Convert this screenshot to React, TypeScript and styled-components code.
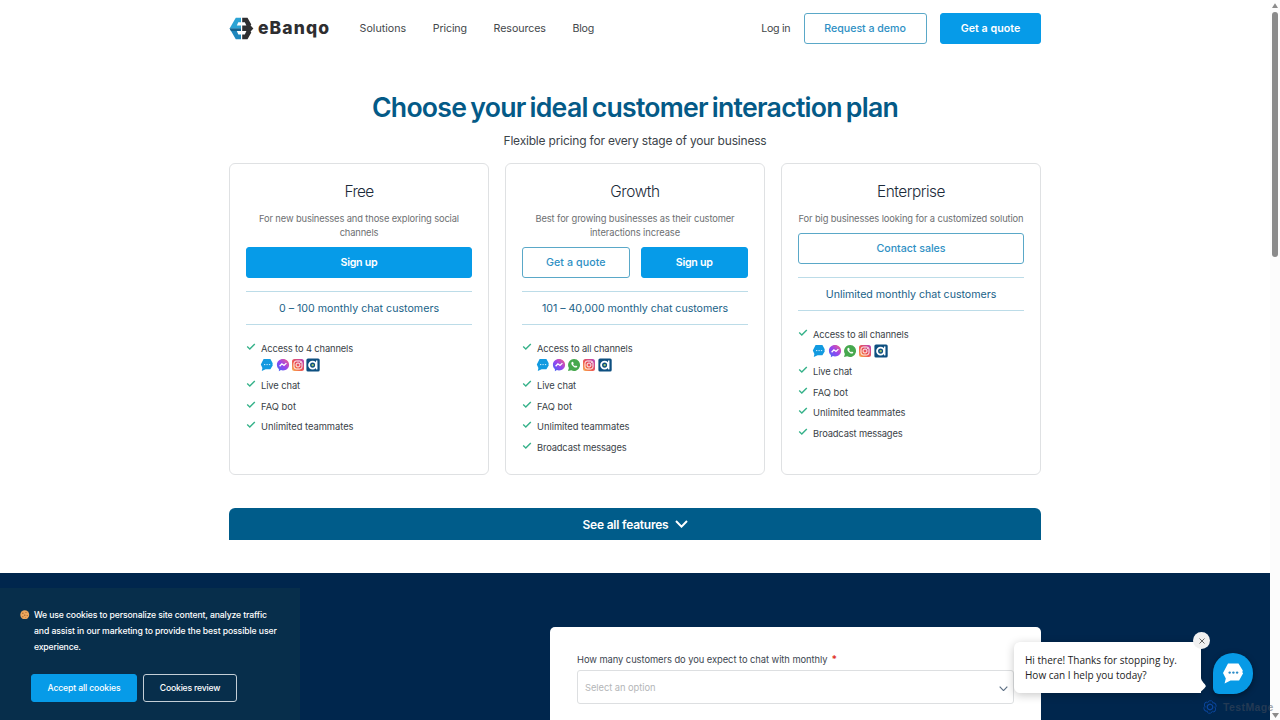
import React from "react";
import styled, { createGlobalStyle, css } from "styled-components";

const GlobalStyle = createGlobalStyle`
  *, *::before, *::after { box-sizing: border-box; }
  body { margin: 0; background: #fff; font-family: Inter, "Open Sans", sans-serif; color: #3a3f44; }
  h1, h2, p, ul { margin: 0; padding: 0; font-weight: 400; }
  button { font-family: inherit; }
`;

const Viewport = styled.div`
  display: grid;
  grid-template-columns: 1270px 10px;
  width: 1280px;
  height: 720px;
  overflow: hidden;
  position: relative;
`;

const Page = styled.div`
  display: flex;
  flex-direction: column;
  align-items: center;
  height: 720px;
  overflow: hidden;
`;

const Container = styled.div`
  width: 812px;
  flex: none;
  display: flex;
  flex-direction: column;
`;

const Label = styled.span<{ $ls?: number }>`
  letter-spacing: ${(p) => p.$ls ?? 0}px;
  white-space: nowrap;
`;

/* Header */
const Header = styled.header`
  display: flex;
  align-items: center;
  height: 57px;
  font-size: 10.67px;
  color: #43474b;
`;

const Logo = styled.div`
  display: flex;
  align-items: center;
  gap: 4px;
  width: 130.6px;
`;

const LogoText = styled.span`
  font-size: 17.5px;
  font-weight: 800;
  letter-spacing: 1.1px;
  line-height: 22px;
  color: #2e2e30;
  margin-top: -2px;
`;

const Nav = styled.nav`
  display: flex;
  gap: 26.6px;
  flex: 1;
`;

const HeaderActions = styled.div`
  display: flex;
  align-items: center;
  gap: 13.4px;
`;

const Button = styled.button<{ $outline?: boolean; $width?: number }>`
  height: 31px;
  flex: ${(p) => (p.$width ? "none" : "1")};
  ${(p) => p.$width && css`width: ${p.$width}px;`}
  padding: 0;
  border-radius: 3px;
  font-size: 10.67px;
  font-weight: ${(p) => (p.$outline ? 500 : 600)};
  line-height: 14px;
  border: 1px solid ${(p) => (p.$outline ? "#5aa8c8" : "#069be8")};
  background: ${(p) => (p.$outline ? "#fff" : "#069be8")};
  color: ${(p) => (p.$outline ? "#2e90c4" : "#fff")};
`;

/* Hero */
const Title = styled.h1`
  margin-top: 32px;
  height: 36px;
  line-height: 36px;
  font-size: 26.67px;
  font-weight: 600;
  letter-spacing: -0.75px;
  word-spacing: -2px;
  text-align: center;
  color: #045a87;
`;

const Subtitle = styled.p`
  margin-top: 7px;
  height: 16px;
  font-size: 12px;
  line-height: 17px;
  letter-spacing: -0.195px;
  text-align: center;
  color: #3c444a;
`;

/* Plans */
const Plans = styled.section`
  display: grid;
  grid-template-columns: repeat(3, 260px);
  gap: 16px;
  margin-top: 15px;
`;

const Card = styled.article`
  height: 312px;
  padding: 17px 16px 0;
  border: 1px solid #dfe1e3;
  border-radius: 6px;
  background: #fff;
  display: flex;
  flex-direction: column;
`;

const PlanName = styled.h2`
  font-size: 15.4px;
  font-weight: 300;
  line-height: 22px;
  text-align: center;
  color: #1c2b3a;
`;

const PlanText = styled.p`
  margin: 9px -4px 0;
  font-size: 9.33px;
  line-height: 14px;
  text-align: center;
  color: #6d6f72;
  display: flex;
  flex-direction: column;
`;

const PlanButtons = styled.div`
  display: flex;
  gap: 11px;
  margin-top: 7px;
`;

const PlanRange = styled.div`
  margin-top: 13px;
  height: 34px;
  line-height: 33px;
  border-top: 1px solid #bcdce8;
  border-bottom: 1px solid #bcdce8;
  font-size: 10.67px;
  text-align: center;
  color: #1a6288;
`;

const FeatureList = styled.ul`
  list-style: none;
  margin-top: 17px;
  display: flex;
  flex-direction: column;
  gap: 6.7px;
`;

const Feature = styled.li`
  display: grid;
  grid-template-columns: 10px 1fr;
  column-gap: 5px;
  font-size: 9.33px;
  line-height: 14px;
  color: #3a4247;
`;

const Channels = styled.div`
  grid-column: 2;
  display: flex;
  align-items: center;
  gap: 1.4px;
  height: 14px;
  margin: 2px 0 0.3px -0.7px;
`;

const SeeAll = styled.button`
  margin-top: 33px;
  height: 32px;
  border: 0;
  padding: 0;
  border-radius: 6px 6px 0 0;
  background: #005c8a;
  color: #fff;
  font-size: 12px;
  font-weight: 600;
  display: flex;
  align-items: center;
  justify-content: center;
  gap: 6px;
`;

/* Quote form */
const QuoteBand = styled.section`
  margin-top: 33px;
  align-self: stretch;
  flex: 1;
  background: #00264d;
  display: flex;
  justify-content: center;
  padding-top: 54px;
`;

const QuoteInner = styled.div`
  width: 812px;
  display: flex;
  justify-content: flex-end;
`;

const FormCard = styled.form`
  width: 491px;
  height: 130px;
  padding: 25px 27px 0;
  background: #fff;
  border-radius: 5px 5px 0 0;
`;

const FieldLabel = styled.label`
  display: flex;
  gap: 4px;
  font-size: 9.33px;
  line-height: 15px;
  color: #3c4650;
`;

const Required = styled.span`
  color: #e0342b;
  font-size: 10px;
  font-weight: 700;
`;

const Select = styled.div`
  display: flex;
  align-items: center;
  justify-content: space-between;
  margin-top: 3px;
  height: 34px;
  padding: 0 5px 0 7px;
  border: 1px solid #dddfe1;
  border-radius: 3px;
  font-size: 9.33px;
  color: #b4b6b8;
  svg { margin-top: 3px; }
`;

/* Cookie banner */
const Cookie = styled.aside`
  position: absolute;
  left: 0;
  top: 588px;
  width: 300px;
  height: 132px;
  padding: 18px 20px 0;
  background: #072e4b;
  color: #fff;
  font-size: 8.67px;
  font-weight: 500;
`;

const CookieMessage = styled.div`
  display: flex;
  gap: 4.5px;
  svg { margin-top: 3.5px; flex: none; }
`;

const CookieText = styled.p`
  display: flex;
  flex-direction: column;
  font-weight: 500;
  line-height: 16px;
  padding-top: 0.5px;
`;

const CookieButtons = styled.div`
  display: flex;
  gap: 6px;
  margin: 19.5px 0 0 11px;
`;

const CookieButton = styled.button<{ $outline?: boolean; $width: number }>`
  width: ${(p) => p.$width}px;
  height: 28px;
  padding: 0;
  border-radius: 3px;
  border: 1px solid ${(p) => (p.$outline ? "#c3ced6" : "#069be8")};
  background: ${(p) => (p.$outline ? "transparent" : "#069be8")};
  color: #fff;
  font-size: 8.67px;
  font-weight: 500;
`;

/* Chat widget */
const Bubble = styled.div`
  position: absolute;
  left: 1014px;
  top: 642px;
  width: 187px;
  height: 51px;
  padding: 11px 11px 0;
  border-radius: 6px 6px 0 6px;
  background: #fff;
  color: #222;
  font-family: "Open Sans", sans-serif;
  font-size: 10px;
  line-height: 15.3px;
  display: flex;
  flex-direction: column;
  box-shadow: 0 2px 10px rgba(0, 0, 0, 0.22);
`;

const BubbleTail = styled.svg`
  position: absolute;
  right: -5px;
  bottom: 0;
`;

const BubbleClose = styled.div`
  position: absolute;
  right: -9px;
  top: -10px;
  width: 17px;
  height: 17px;
  border-radius: 50%;
  background: #f1f1f1;
  display: flex;
  align-items: center;
  justify-content: center;
`;

const ChatButton = styled.div`
  position: absolute;
  left: 1213px;
  top: 653px;
  width: 40px;
  height: 41px;
  border-radius: 20px 20px 20px 6px;
  background: #079ae6;
  box-shadow: 0 2px 6px rgba(0, 0, 0, 0.4);
  display: flex;
  align-items: center;
  justify-content: center;
`;

const Watermark = styled.div`
  position: absolute;
  left: 1202px;
  top: 699px;
  display: flex;
  align-items: center;
  gap: 5px;
  height: 16px;
  font-family: "Liberation Sans", sans-serif;
  font-size: 10.5px;
  font-weight: 700;
  letter-spacing: 0.4px;
  color: rgba(70, 78, 92, 0.5);
`;

const Scrollbar = styled.div`
  display: flex;
  flex-direction: column;
  align-items: center;
  justify-content: space-between;
  background: #fcfcfc;
  height: 720px;
  padding: 3px 0 2px;
`;

const ScrollTop = styled.div`
  display: flex;
  flex-direction: column;
  align-items: center;
  gap: 4px;
`;

const Thumb = styled.div`
  width: 6px;
  height: 245px;
  border-radius: 3px;
  background: #8b8b8b;
`;

const LogoMark = () => (
  <svg width="25" height="23" viewBox="0 0 25 23">
    <path d="M6.800 .8H12V5.300H9.300L7.800 8.600H12V11.600H.6z" fill="#2ba3d4" />
    <path d="M.6 11.600H12V14H7.800L9.300 17.500H12V22.200H6.800z" fill="#1f87bd" />
    <path d="M.6 11.600H12V14H2z" fill="#14638f" />
    <path d="M13.200 .8H18.500L22.300 7.400L21.600 8.600L24.400 11.500L21.600 14.400L22.300 15.600L18.500 22.200H13.200V17.500H15.800L17.400 14H13.200V8.600H17.400L15.800 5.300H13.200z" fill="#2e2e30" />
  </svg>
);

const Check = () => (
  <svg width="10" height="14" viewBox="0 0 10 14">
    <path d="M1.200 4.600L3.800 7L8.800 1.900" fill="none" stroke="#36b28a" strokeWidth="1.400" />
  </svg>
);

const Chevron = ({ w, color, sw }: { w: number; color: string; sw: number }) => (
  <svg width={w} height={w * 0.62} viewBox="0 0 13 8">
    <path d="M1 1L6.500 6.600L12 1" fill="none" stroke={color} strokeWidth={sw} />
  </svg>
);

const ChatIcon = () => (
  <svg width="14" height="14" viewBox="0 0 14 14">
    <path d="M3.600 1h6.800l2.300 4.200-.2 1.200.3.800-2.400 4.100H5.600L1.800 13l.6-3L.8 6.600z" fill="#129ae0" />
    <path d="M4 6.600h1.300M6.500 6.600h1.200M8.900 6.600h1.300" stroke="#d6efff" strokeWidth="1" />
  </svg>
);

const MessengerIcon = () => (
  <svg width="14" height="14" viewBox="0 0 14 14">
    <defs>
      <linearGradient id="msg" x1="0" y1="1" x2="1" y2="0">
        <stop offset="0" stopColor="#3a6cf6" />
        <stop offset=".5" stopColor="#9a44ee" />
        <stop offset="1" stopColor="#f8607e" />
      </linearGradient>
    </defs>
    <path d="M7 .9C3.500 .9 .9 3.400 .9 6.700c0 1.800.7 3.200 2 4.300v2.200l2-1.100c.7.200 1.400.3 2.100.3 3.500 0 6.100-2.400 6.100-5.700S10.500 .9 7 .9z" fill="url(#msg)" />
    <path d="M3.600 8.300L5.900 5.800L8 7.400L10.400 5.100" fill="none" stroke="#fff" strokeWidth="1.300" />
  </svg>
);

const WhatsAppIcon = () => (
  <svg width="14" height="14" viewBox="0 0 14 14">
    <path d="M7.100 1A6 6 0 0 0 1.900 10L1 13.100L4.200 12.300A6 6 0 1 0 7.100 1z" fill="#46a84e" />
    <path d="M4.900 3.900c-1 .7-.7 2.200.7 3.800 1.500 1.700 3.300 2.400 4.300 1.500l.5-.8-1.500-.9-.8.700c-.9-.3-1.600-1.100-2-1.900l.6-.8-.7-1.700z" fill="#fff" />
  </svg>
);

const InstagramIcon = () => (
  <svg width="14" height="14" viewBox="0 0 14 14">
    <defs>
      <linearGradient id="ig" x1="0" y1="1" x2="1" y2="0">
        <stop offset="0" stopColor="#f9b451" />
        <stop offset=".45" stopColor="#ee5550" />
        <stop offset="1" stopColor="#b544c4" />
      </linearGradient>
    </defs>
    <rect x="1" y="1" width="12" height="12" rx="2.500" fill="url(#ig)" />
    <rect x="3" y="3" width="8" height="8" rx="2.200" fill="none" stroke="#fff" strokeWidth=".9" />
    <circle cx="7" cy="7" r="2" fill="none" stroke="#fff" strokeWidth=".9" />
    <circle cx="9.400" cy="4.600" r=".5" fill="#fff" />
  </svg>
);

const AppIcon = () => (
  <svg width="14" height="14" viewBox="0 0 14 14">
    <rect x=".4" y=".4" width="13.300" height="13.200" rx="1.600" fill="#0d4f80" />
    <circle cx="6.600" cy="7.100" r="3.500" fill="none" stroke="#fff" strokeWidth="1.900" />
    <path d="M10.700 2.500v8.900" stroke="#fff" strokeWidth="1.500" />
    <circle cx="6.700" cy="7.100" r="1.200" fill="#9cc46a" />
  </svg>
);

const CookieIcon = () => (
  <svg width="9.500" height="9.500" viewBox="0 0 10 10">
    <circle cx="5" cy="5" r="4.700" fill="#eba65c" />
    <g fill="#9a5c2c">
      <circle cx="3" cy="3.400" r=".7" />
      <circle cx="6.300" cy="2.600" r=".6" />
      <circle cx="5" cy="5.400" r=".7" />
      <circle cx="7.600" cy="5.800" r=".6" />
      <circle cx="3" cy="7" r=".6" />
      <circle cx="6" cy="8" r=".5" />
    </g>
  </svg>
);

type T = [string, number];

const Txt = ({ t }: { t: T }) => <Label $ls={t[1]}>{t[0]}</Label>;

const nav: T[] = [["Solutions", 0], ["Pricing", -0.11], ["Resources", -0.077], ["Blog", -0.245]];

type Plan = {
  name: T;
  text: T[];
  buttons: { t: T; outline?: boolean }[];
  range: T;
  access: T;
  whatsapp: boolean;
  features: T[];
};

const common: T[] = [["Live chat", -0.088], ["FAQ bot", 0.016], ["Unlimited teammates", -0.014]];
const broadcast: T = ["Broadcast messages", -0.146];

const plans: Plan[] = [
  {
    name: ["Free", -0.7],
    text: [["For new businesses and those exploring social", -0.124], ["channels", -0.124]],
    buttons: [{ t: ["Sign up", -0.252] }],
    range: ["0 – 100 monthly chat customers", 0],
    access: ["Access to 4 channels", -0.128],
    whatsapp: false,
    features: common,
  },
  {
    name: ["Growth", -0.36],
    text: [["Best for growing businesses as their customer", -0.114], ["interactions increase", -0.08]],
    buttons: [{ t: ["Get a quote", 0.08], outline: true }, { t: ["Sign up", -0.252] }],
    range: ["101 – 40,000 monthly chat customers", -0.036],
    access: ["Access to all channels", -0.127],
    whatsapp: true,
    features: [...common, broadcast],
  },
  {
    name: ["Enterprise", -0.46],
    text: [["For big businesses looking for a customized solution", -0.117]],
    buttons: [{ t: ["Contact sales", -0.037], outline: true }],
    range: ["Unlimited monthly chat customers", -0.037],
    access: ["Access to all channels", -0.127],
    whatsapp: true,
    features: [...common, broadcast],
  },
];

const PlanCard = ({ plan }: { plan: Plan }) => (
  <Card>
    <PlanName><Txt t={plan.name} /></PlanName>
    <PlanText>{plan.text.map((t) => <Txt key={t[0]} t={t} />)}</PlanText>
    <PlanButtons>
      {plan.buttons.map((b) => (
        <Button key={b.t[0]} $outline={b.outline}><Txt t={b.t} /></Button>
      ))}
    </PlanButtons>
    <PlanRange><Txt t={plan.range} /></PlanRange>
    <FeatureList>
      <Feature>
        <Check />
        <Txt t={plan.access} />
        <Channels>
          <ChatIcon />
          <MessengerIcon />
          {plan.whatsapp && <WhatsAppIcon />}
          <InstagramIcon />
          <AppIcon />
        </Channels>
      </Feature>
      {plan.features.map((f) => (
        <Feature key={f[0]}><Check /><Txt t={f} /></Feature>
      ))}
    </FeatureList>
  </Card>
);

export default function App() {
  return (
    <>
      <GlobalStyle />
      <Viewport>
        <Page>
          <Container>
            <Header>
              <Logo><LogoMark /><LogoText>eBanqo</LogoText></Logo>
              <Nav>{nav.map((t) => <Txt key={t[0]} t={t} />)}</Nav>
              <HeaderActions>
                <Txt t={["Log in", -0.3]} />
                <Button $outline $width={123}><Txt t={["Request a demo", -0.044]} /></Button>
                <Button $width={101}><Txt t={["Get a quote", 0.031]} /></Button>
              </HeaderActions>
            </Header>
            <Title>Choose your ideal customer interaction plan</Title>
            <Subtitle>Flexible pricing for every stage of your business</Subtitle>
            <Plans>{plans.map((p) => <PlanCard key={p.name[0]} plan={p} />)}</Plans>
            <SeeAll>
              <Txt t={["See all features", -0.217]} />
              <Chevron w={13} color="#fff" sw={2} />
            </SeeAll>
          </Container>
          <QuoteBand>
            <QuoteInner>
              <FormCard>
                <FieldLabel>
                  <Txt t={["How many customers do you expect to chat with monthly", -0.045]} />
                  <Required>*</Required>
                </FieldLabel>
                <Select>
                  <Txt t={["Select an option", -0.045]} />
                  <Chevron w={9} color="#5c6f84" sw={1.7} />
                </Select>
              </FormCard>
            </QuoteInner>
          </QuoteBand>
        </Page>

        <Scrollbar>
          <ScrollTop>
            <svg width="6" height="5" viewBox="0 0 6 5"><path d="M3 .3L6 5H0z" fill="#8b8b8b" /></svg>
            <Thumb />
          </ScrollTop>
          <svg width="7" height="5" viewBox="0 0 7 5"><path d="M0 0h7L3.500 5z" fill="#8b8b8b" /></svg>
        </Scrollbar>

        <Cookie>
          <CookieMessage>
            <CookieIcon />
            <CookieText>
              <Txt t={["We use cookies to personalize site content, analyze traffic", -0.128]} />
              <Txt t={["and assist in our marketing to provide the best possible user", -0.101]} />
              <Txt t={["experience.", -0.18]} />
            </CookieText>
          </CookieMessage>
          <CookieButtons>
            <CookieButton $width={106}><Txt t={["Accept all cookies", -0.142]} /></CookieButton>
            <CookieButton $outline $width={94}><Txt t={["Cookies review", -0.211]} /></CookieButton>
          </CookieButtons>
        </Cookie>

        <Watermark>
          <svg width="16" height="16" viewBox="0 0 16 16" fill="none" stroke="#0b47a0" strokeWidth=".9">
            {[0, 60, 120, 180, 240, 300].map((a) => (
              <path key={a} transform={`rotate(${a} 8 8)`} d="M5.500 4.200A3 3 0 0 1 10.800 2.800M8 5.200L10.800 6.700V9.500" />
            ))}
          </svg>
          TestMage
        </Watermark>

        <Bubble>
          <Label>Hi there! Thanks for stopping by.</Label>
          <Label>How can I help you today?</Label>
          <BubbleTail width="9" height="15" viewBox="0 0 9 15">
            <path d="M0 0H4C4 3 8.500 6 8.800 8C8.800 9.500 5 12.500 3 14.500C2 15 1 15 0 15z" fill="#fff" />
          </BubbleTail>
          <BubbleClose>
            <svg width="6" height="6" viewBox="0 0 6 6"><path d="M.5.5l5 5M5.500.5l-5 5" stroke="#555" strokeWidth=".9" /></svg>
          </BubbleClose>
        </Bubble>

        <ChatButton>
          <svg width="23" height="23" viewBox="0 0 23 23">
            <path d="M6 1.500h10.500l4.300 7-.5 1.800.8 1-4 7.200H8.500L2.600 21.500l1.200-5L1 11z" fill="#fff" />
            <g fill="#2b8cc8"><circle cx="7.700" cy="10.600" r="1.200" /><circle cx="11.400" cy="10.600" r="1.200" /><circle cx="15.100" cy="10.600" r="1.200" /></g>
          </svg>
        </ChatButton>
      </Viewport>
    </>
  );
}
